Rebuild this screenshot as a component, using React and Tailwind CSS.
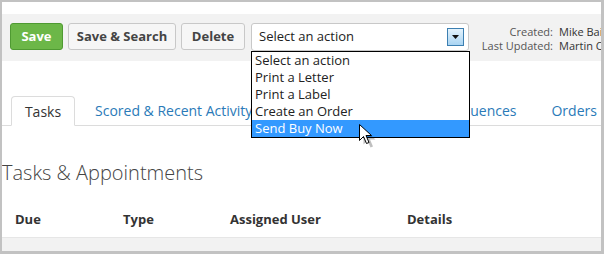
import React from 'react'

const options = ['Select an action', 'Print a Letter', 'Print a Label', 'Create an Order', 'Send Buy Now']

function Cursor () {
  return (
    <svg width="22" height="26" viewBox="0 0 22 26" className="absolute left-[356px] top-[121px]">
      <path d="M3.5 3.5 L3.5 19.5 L7.5 15.5 L10.5 22.5 L13 21.5 L10 14.5 L15.5 14.5 Z" fill="#000" opacity="0.25" transform="translate(2 2)" />
      <path d="M1.5 1.5 L1.5 17.5 L5.5 13.5 L8.5 20.5 L11 19.5 L8 12.5 L13.5 12.5 Z" fill="#fff" stroke="#000" strokeWidth="1" strokeLinejoin="miter" />
    </svg>
  )
}

export default function App () {
  return (
    <div className="relative w-[604px] h-[254px] overflow-hidden bg-white border-l-2 border-t-2 border-r-[3px] border-b-[3px] border-[#c2c2c2] font-['Open_Sans',sans-serif] text-[#333]">
      {/* toolbar */}
      <div className="mt-[12px] h-[47px] bg-[#f2f2f2] flex items-start pt-[9px] pl-[8px] overflow-hidden">
        <button className="shrink-0 h-[27px] w-[53px] rounded-[3px] bg-[#6cb748] border border-[#4f9a32] text-white text-[13px] font-bold">Save</button>
        <button className="shrink-0 ml-[5px] h-[27px] w-[108px] rounded-[3px] bg-[#f6f6f6] border border-[#c8c8c8] text-[#444] text-[13px] font-bold">Save &amp; Search</button>
        <button className="shrink-0 ml-[5px] h-[27px] w-[64px] rounded-[3px] bg-[#f6f6f6] border border-[#c8c8c8] text-[#444] text-[13px] font-bold">Delete</button>
        <div className="shrink-0 ml-[6px] h-[28px] w-[218px] rounded-[3px] bg-white border border-[#c8c8c8] flex items-center justify-between pl-[7px] pr-[4px]">
          <span className="text-[13px] text-[#222]">Select an action</span>
          <span className="w-[17px] h-[18px] border border-[#3c7fb1] bg-gradient-to-b from-[#e5f3fc] to-[#a9d4f2] flex items-center justify-center">
            <svg width="7" height="4" viewBox="0 0 7 4"><path d="M0 0 H7 L3.5 4 Z" fill="#111" /></svg>
          </span>
        </div>
        <div className="shrink-0 ml-[12px] pt-[2px] text-[11px] leading-[14px] text-[#555] grid grid-cols-[72px_auto] gap-x-[6px]">
          <span className="text-right">Created:</span>
          <span className="text-[#333] whitespace-nowrap">Mike Bailey</span>
          <span className="text-right whitespace-nowrap">Last Updated:</span>
          <span className="text-[#333] whitespace-nowrap">Martin Cole</span>
        </div>
      </div>

      {/* tabs */}
      <div className="mt-[35px] mx-[-2px] h-[30px] border-b border-[#dcdcdc] flex items-end pl-[11px] text-[14px] whitespace-nowrap">
        <div className="h-[30px] w-[64px] -mb-px border border-b-white border-[#dcdcdc] rounded-t-[4px] bg-white flex items-center justify-center text-[#333]">Tasks</div>
        <div className="h-[30px] flex items-center pl-[20px] text-[#2a7ab8] gap-[36px]">
          <span>Scored &amp; Recent Activity</span>
          <span className="mr-[14px]">Notes</span>
          <span>Campaign Sequences</span>
          <span className="-ml-[1px]">Orders</span>
        </div>
      </div>

      <h2 className="mt-[33px] text-[20px] leading-[28px] font-light text-[#444]">Tasks &amp; Appointments</h2>

      <div className="mt-[16px] h-[35px] border-b border-[#e6e6e6] flex items-center text-[13px] font-bold text-[#333]">
        <span className="w-[121px] pl-[13px]">Due</span>
        <span className="w-[107px]">Type</span>
        <span className="w-[177px]">Assigned User</span>
        <span>Details</span>
      </div>
      <div className="h-[20px] bg-[#f2f2f2]" />

      {/* open dropdown list */}
      <div className="absolute left-[249px] top-[49px] w-[219px] border border-black bg-white text-[13px] leading-[17px] text-[#222]">
        {options.map((o, i) => (
          <div key={o} className={i === options.length - 1 ? 'pl-[3px] bg-[#3399ff] text-white' : 'pl-[3px]'}>{o}</div>
        ))}
      </div>
      <Cursor />
    </div>
  )
}
